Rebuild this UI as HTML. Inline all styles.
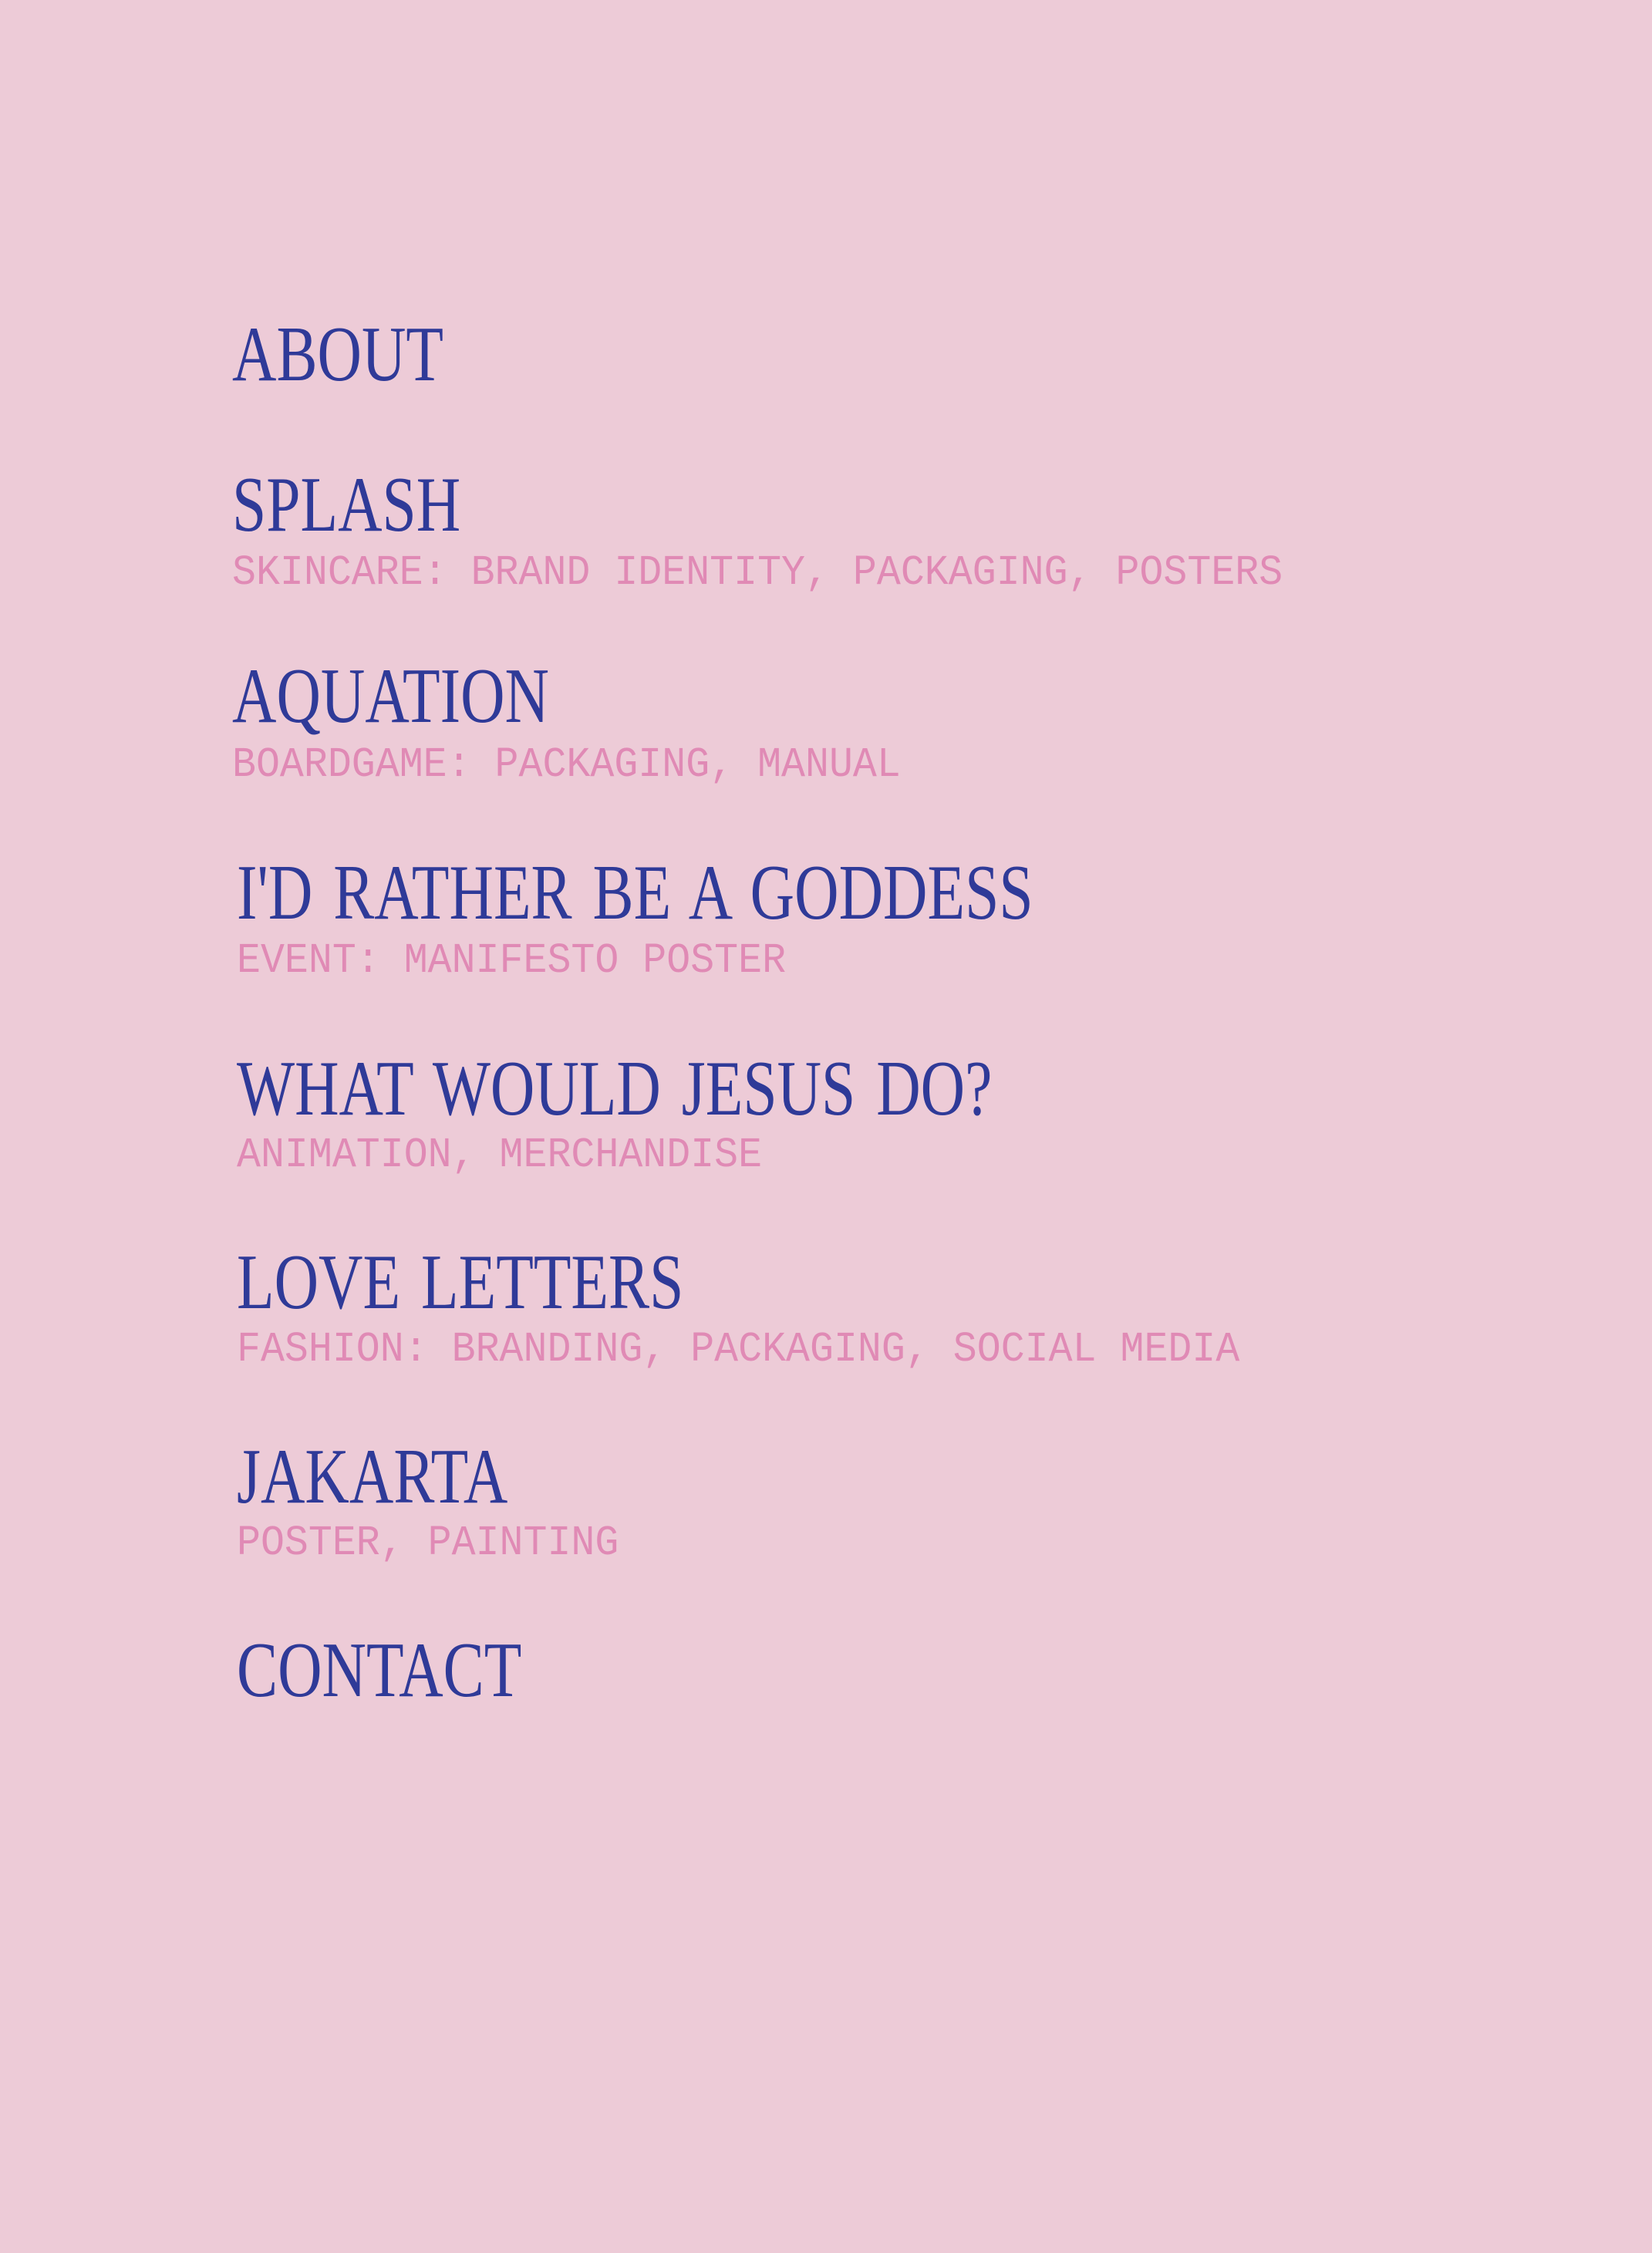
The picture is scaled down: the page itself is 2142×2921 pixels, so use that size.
<!DOCTYPE html>
<html><head><meta charset="utf-8"><style>
html,body{margin:0;padding:0;}
body{width:2142px;height:2921px;background:#edcbd7;position:relative;overflow:hidden;}
.t{position:absolute;font-family:"Liberation Serif",serif;font-size:102px;line-height:1;color:#2f3a98;white-space:nowrap;transform:scaleX(0.78);transform-origin:0 0;word-spacing:9px;}
.s{position:absolute;font-family:"Liberation Mono",monospace;font-size:55px;line-height:1;color:#e08ab5;white-space:nowrap;transform:scaleX(0.938);transform-origin:0 0;}
</style></head><body>
<div class="t" style="left:301px;top:409px">ABOUT</div>
<div class="t" style="left:301px;top:604px">SPLASH</div>
<div class="s" style="left:301px;top:715px">SKINCARE: BRAND IDENTITY, PACKAGING, POSTERS</div>
<div class="t" style="left:301px;top:852px">AQUATION</div>
<div class="s" style="left:301px;top:964px">BOARDGAME: PACKAGING, MANUAL</div>
<div class="t" style="left:307px;top:1107px">I'D RATHER BE A GODDESS</div>
<div class="s" style="left:307px;top:1218px">EVENT: MANIFESTO POSTER</div>
<div class="t" style="left:307px;top:1361px">WHAT WOULD JESUS DO?</div>
<div class="s" style="left:307px;top:1470px">ANIMATION, MERCHANDISE</div>
<div class="t" style="left:307px;top:1612px">LOVE LETTERS</div>
<div class="s" style="left:307px;top:1722px">FASHION: BRANDING, PACKAGING, SOCIAL MEDIA</div>
<div class="t" style="left:307px;top:1864px">JAKARTA</div>
<div class="s" style="left:307px;top:1973px">POSTER, PAINTING</div>
<div class="t" style="left:307px;top:2115px">CONTACT</div>
</body></html>
